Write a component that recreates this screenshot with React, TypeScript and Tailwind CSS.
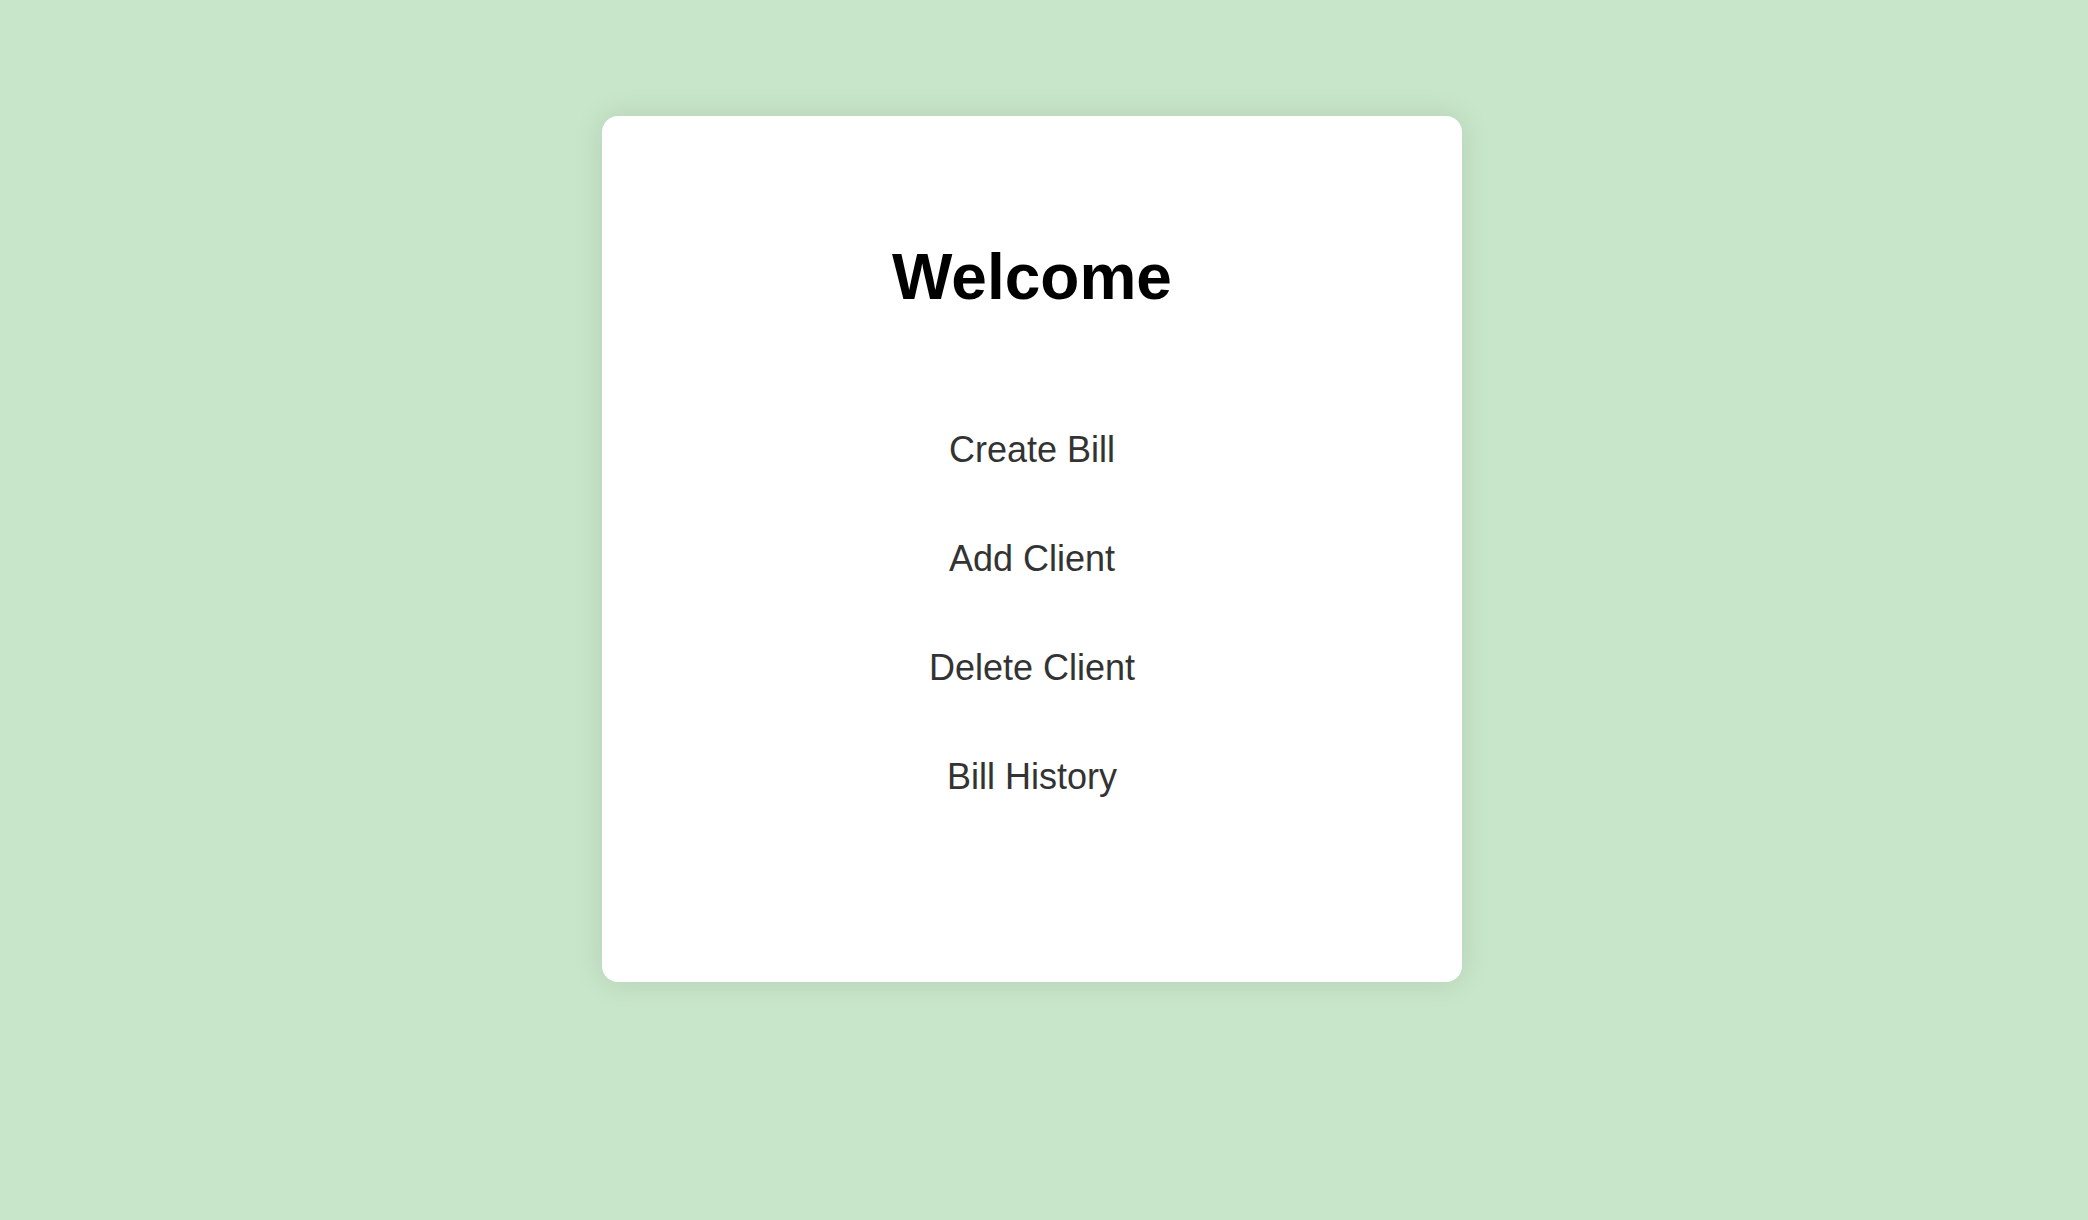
import React from "react";

export default function App() {
  const items = ["Create Bill", "Add Client", "Delete Client", "Bill History"];
  return (
    <div
      className="min-h-[1220px] w-full bg-[#c8e6c9] flex justify-center pr-[24px] pt-[116px]"
      style={{ fontFamily: '"Liberation Sans", Arial, sans-serif' }}
    >
      <div className="w-[860px] h-[866px] bg-white rounded-[16px] shadow-[0_0_30px_rgba(0,0,0,0.1)] flex flex-col items-center pt-[129px]">
        <h1 className="text-[64px] leading-[64px] font-bold text-black">Welcome</h1>
        <div className="flex flex-col items-center gap-[69px] mt-[121px]">
          {items.map((t) => (
            <a key={t} className="text-[36px] leading-[40px] text-[#333333] cursor-pointer">
              {t}
            </a>
          ))}
        </div>
      </div>
    </div>
  );
}
